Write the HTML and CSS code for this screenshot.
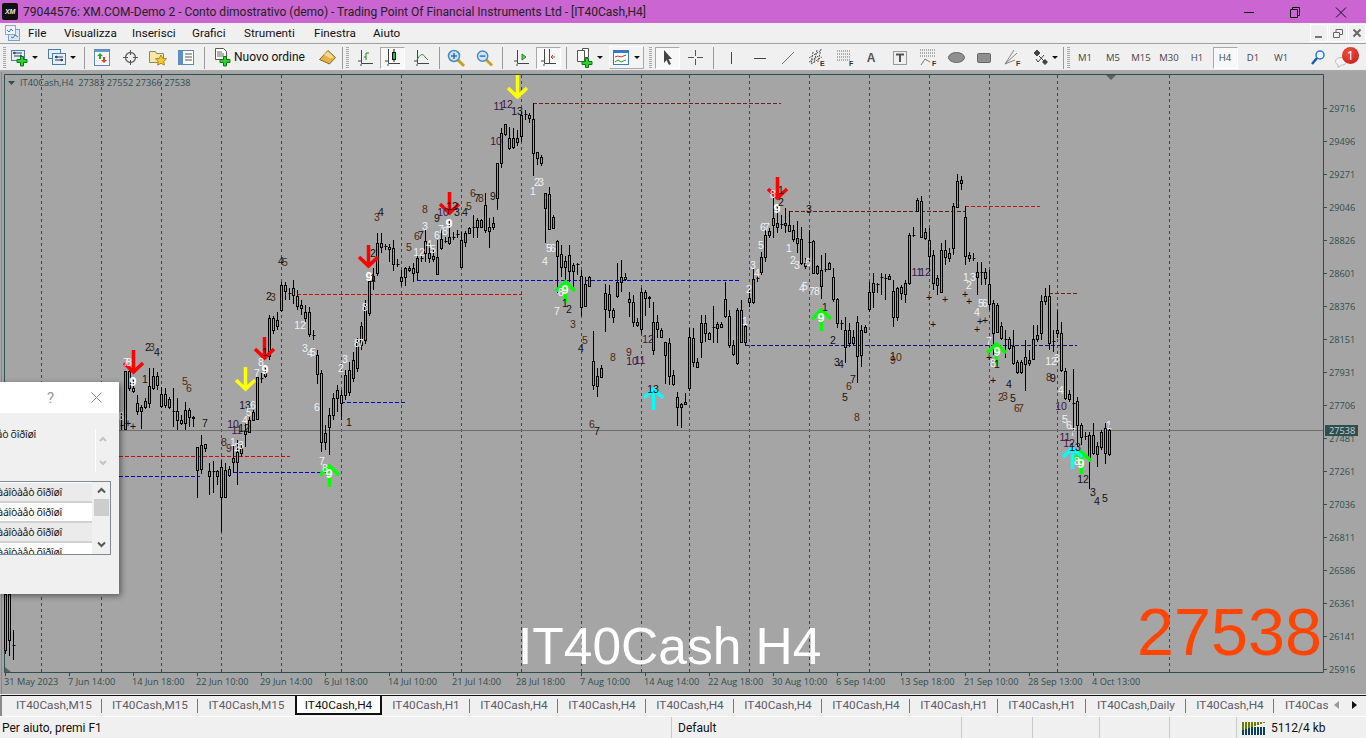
FILE: index.html
```html
<!DOCTYPE html>
<html lang="it">
<head>
<meta charset="utf-8">
<title>MetaTrader 4</title>
<link rel="stylesheet" href="styles.css">
</head>
<body>
<div class="app">
  <header class="titlebar">
    <div class="logo">XM</div>
    <div class="title-text">79044576: XM.COM-Demo 2 - Conto dimostrativo (demo) - Trading Point Of Financial Instruments Ltd - [IT40Cash,H4]</div>
    <div class="winbtns">
      <svg class="winbtn" width="46" height="20" viewBox="0 0 46 20"><path d="M18 10.5h10" stroke="#111" fill="none"/></svg>
      <svg class="winbtn" width="46" height="20" viewBox="0 0 46 20"><path d="M18.5 7.5h7v8h-7zM20.5 7.5v-2h7v8h-2" stroke="#111" fill="none"/></svg>
      <svg class="winbtn" width="46" height="20" viewBox="0 0 46 20"><path d="M18 5.5l10 10M28 5.5l-10 10" stroke="#111" fill="none"/></svg>
    </div>
  </header>

  <nav class="menubar">
    <svg class="menuicon" width="15" height="16" viewBox="0 0 15 16"><rect x="3.5" y="4.500" width="11" height="11" fill="#dce8f5" stroke="#7f9fc5"/><rect x=".5" y=".5" width="10" height="9" fill="#eef3fa" stroke="#88a8cc"/><path d="M2 5l2 2 2-3 2 2M6 12l2 1 2-3 3 2" stroke="#3f78b8" fill="none"/></svg>
    <span class="menuitem m-file">File</span>
    <span class="menuitem m-vis">Visualizza</span>
    <span class="menuitem m-ins">Inserisci</span>
    <span class="menuitem m-gra">Grafici</span>
    <span class="menuitem m-str">Strumenti</span>
    <span class="menuitem m-fin">Finestra</span>
    <span class="menuitem m-aiu">Aiuto</span>
    <div class="mdibtns">
      <span class="mdibtn"><svg width="10" height="10" viewBox="0 0 10 10"><path d="M1 8h7v2H1z" fill="#777"/></svg></span>
      <span class="mdibtn"><svg width="10" height="10" viewBox="0 0 10 10"><path d="M.5 4.500h6v5h-6zM3 4V1.500h6.500v5H7" stroke="#666" fill="none"/><path d="M1 4.500h5M3 1.500h6" stroke="#666"/></svg></span>
      <span class="mdibtn"><svg width="10" height="10" viewBox="0 0 10 10"><path d="M1.500 1.500l7 7M8.500 1.500l-7 7" stroke="#666" stroke-width="2" fill="none"/></svg></span>
    </div>
  </nav>

  <div class="toolbar">
    <svg class="grip ml3" width="3" height="22"></svg>
    <svg class="ml5" width="17" height="18" viewBox="0 0 17 18"><rect x=".5" y="1.500" width="13" height="10" fill="#e6eef8" stroke="#4d7aa8"/><path d="M3 4h8M3 7h5M2 4l2-1v2zM11 7l-2-1v2z" stroke="#26415f" fill="none"/><path d="M9.500 7.500h3v3h3.500v3h-3.500v3.500h-3v-3.500h-3.500v-3h3.500z" fill="#2fd02f" stroke="#0a7a14"/></svg>
    <i class="drop ml4"></i>
    <svg class="ml10" width="18" height="18" viewBox="0 0 18 18"><rect x=".5" y=".5" width="12" height="9" fill="#e6eef8" stroke="#4d7aa8"/><rect x="4.500" y="4.500" width="13" height="11" fill="#e6eef8" stroke="#4d7aa8"/><path d="M7 8h8M7 11h8M7 8l2-1v2zM15 11l-2-1v2z" stroke="#26415f" fill="none"/></svg>
    <i class="drop ml4"></i>
    <i class="sep ml8"></i>
    <svg class="ml9" width="16" height="17" viewBox="0 0 16 17"><rect x=".5" y=".5" width="15" height="16" fill="#f5f8fc" stroke="#5e88b5"/><path d="M1 1h14v2H1z" fill="#6a98c8"/><path d="M6 4l3 3H7v3H5V7H3z" fill="#22aa22"/><path d="M10 14l-3-3h2V8h2v3h2z" fill="#e04020"/></svg>
    <svg class="ml13" width="15" height="15" viewBox="0 0 15 15"><circle cx="7.500" cy="7.500" r="5" fill="none" stroke="#666" stroke-width="1.300"/><path d="M7.500 0v5M7.500 10v5M0 7.500h5M10 7.500h5" stroke="#555" fill="none"/></svg>
    <svg class="ml11" width="18" height="17" viewBox="0 0 18 17"><path d="M.5 2.500h6l1 2h7v9H.5z" fill="#f7e8a8" stroke="#8a8a60"/><path d="M12 6l1.700 3.300 3.800.5-2.700 2.600.6 3.700-3.400-1.800-3.400 1.800.6-3.700-2.700-2.600 3.800-.5z" fill="#f5c832" stroke="#a88a20"/></svg>
    <svg class="ml11" width="16" height="15" viewBox="0 0 16 15"><rect x=".5" y=".5" width="15" height="14" fill="#fff" stroke="#5e88b5"/><path d="M1 1h4v13H1z" fill="#5a90cc"/><path d="M7 4h7M7 7h7M7 10h7" stroke="#555"/></svg>
    <i class="sep ml10"></i>
    <svg class="ml10" width="17" height="19" viewBox="0 0 17 19"><path d="M.5.500h8l3 3v8H.5z" fill="#fff" stroke="#555"/><path d="M2 4h5M2 6h7M2 8h7" stroke="#666"/><path d="M8.500 8.500h3v3h3.500v3h-3.500v3.500h-3v-3.500h-3.500v-3h3.500z" fill="#2fd02f" stroke="#0a7a14"/></svg>
    <span class="order-text ml2">Nuovo ordine</span>
    <svg class="ml12" width="17" height="15" viewBox="0 0 17 15"><path d="M9 .5l7.500 7-6 6.500L.5 9.500z" fill="#e6b04a" stroke="#8a6a22"/><path d="M9 1.500l6 6-4 1-6-4z" fill="#f5d890"/></svg>
    <i class="sep ml6"></i>
    <svg class="grip ml3" width="3" height="22"></svg>
    <svg class="ml9" width="15" height="16" viewBox="0 0 15 16"><path d="M3.500 0v13.500H15M0 11h3M3 14v2" stroke="#444" fill="none"/><path d="M8 10V3M8 3h3M6 7h2" stroke="#1a8a1a" fill="none"/></svg>
    <span class="toolbox ml7"><svg width="15" height="17" viewBox="0 0 15 17"><path d="M3.500 0v14.500H15M0 12h3M3 15v2" stroke="#444" fill="none"/><rect x="7.500" y="3.500" width="3" height="7" fill="#25c425" stroke="#111"/><path d="M9 0v3M9 11v2" stroke="#111"/></svg></span>
    <svg class="ml9" width="15" height="16" viewBox="0 0 15 16"><path d="M3.500 0v13.500H15M0 11h3M3 14v2" stroke="#444" fill="none"/><path d="M3 10c3-6 6-7 8-3l3 3" stroke="#2a8a40" fill="none"/></svg>
    <i class="sep ml10"></i>
    <svg class="ml7" width="18" height="18" viewBox="0 0 18 18"><path d="M11 11l6 6" stroke="#c8a020" stroke-width="3"/><circle cx="7" cy="7" r="5.500" fill="#d0e4f8" stroke="#4488c8" stroke-width="1.500"/><path d="M4 7h6M7 4v6" stroke="#3070b0" stroke-width="1.500"/></svg>
    <svg class="ml11" width="17" height="18" viewBox="0 0 18 18"><path d="M11 11l6 6" stroke="#c8a020" stroke-width="3"/><circle cx="7" cy="7" r="5.500" fill="#d0e4f8" stroke="#4488c8" stroke-width="1.500"/><path d="M4 7h6" stroke="#3070b0" stroke-width="1.500"/></svg>
    <i class="sep ml9"></i>
    <svg class="ml11" width="15" height="16" viewBox="0 0 15 16"><path d="M3.500 0v13.500H15M0 11h3M3 14v2" stroke="#444" fill="none"/><path d="M8 4l4 3-4 3z" fill="#6c6" stroke="#1a8a1a"/></svg>
    <span class="toolbox ml7"><svg width="15" height="17" viewBox="0 0 15 17"><path d="M3.500 0v14.500H15M0 12h3M3 15v2" stroke="#444" fill="none"/><path d="M8.500 0v14" stroke="#1f4fa0"/><path d="M14 8H10M12 6l-2 2 2 2" stroke="#c84020" fill="none"/></svg></span>
    <i class="sep ml5"></i>
    <svg class="ml10" width="18" height="20" viewBox="0 0 18 20"><path d="M5.500.5h6v9h-6z" fill="#fff" stroke="#555"/><path d="M.5 2.500h7v11h-7z" fill="#fff" stroke="#555"/><path d="M8.500 10.500h3v3h3.500v3h-3.500v3h-3v-3h-3.500v-3h3.500z" fill="#2fd02f" stroke="#0a7a14"/></svg>
    <i class="drop ml2"></i>
    <span class="indicators ml6"><svg width="16" height="15" viewBox="0 0 16 15"><rect x=".5" y=".5" width="15" height="14" fill="#fff" stroke="#3a78c0"/><path d="M1 1h14v2H1z" fill="#3a78c0"/><path d="M2 7l3-1 3 1 5-2" stroke="#d83020" fill="none"/><path d="M2 12l3-2 3 2 5-2" stroke="#20a020" fill="none"/></svg><i class="drop"></i></span>
    <svg class="grip ml5" width="3" height="22"></svg>
    <span class="toolbox ml3"><svg width="10" height="15" viewBox="0 0 10 15"><path d="M1 0l8 9H5.500l2.500 5-2 1-2.500-5L1 13z" fill="#444"/></svg></span>
    <svg class="ml8" width="15" height="15" viewBox="0 0 15 15"><path d="M7.500 0v6M7.500 9v6M0 7.500h6M9 7.500h6" stroke="#555" fill="none"/></svg>
    <i class="sep ml10"></i>
    <svg class="ml10" width="14" height="14" viewBox="0 0 14 14"><path d="M7.500 1v12" stroke="#444"/></svg>
    <svg class="ml15" width="14" height="14" viewBox="0 0 14 14"><path d="M1 7.500h12" stroke="#444"/></svg>
    <svg class="ml14" width="14" height="14" viewBox="0 0 14 14"><path d="M1 13L13 1" stroke="#777"/></svg>
    <svg class="ml13" width="17" height="17" viewBox="0 0 17 17"><path d="M1 9l11-7M1 13l11-7M3 15l11-7M5 3l-2 12M9 1L6 14M13 0l-3 13" stroke="#555" fill="none" stroke-dasharray="2 1"/><text class="tiny" x="12" y="17">E</text></svg>
    <svg class="ml12" width="17" height="17" viewBox="0 0 17 17"><path d="M0 2h14M0 5h14M0 8h14M0 11h14" stroke="#666" stroke-dasharray="1 1"/><text class="tiny" x="12" y="17">F</text></svg>
    <span class="lettericon ml10">A</span>
    <svg class="ml15" width="14" height="14" viewBox="0 0 14 14"><rect x=".5" y=".5" width="13" height="13" fill="none" stroke="#444" stroke-dasharray="1 1"/><path d="M3 3.500h8M7 3.500V11" stroke="#555" stroke-width="2"/></svg>
    <svg class="ml13" width="17" height="17" viewBox="0 0 17 17"><path d="M0 1h15M0 4h15M0 7h15" stroke="#666" stroke-dasharray="1 1"/><path d="M1 16l4-6 5 3" stroke="#777" fill="none"/><text class="tiny" x="12" y="17">F</text></svg>
    <svg class="ml11" width="17" height="11" viewBox="0 0 17 11"><ellipse cx="8.500" cy="5.500" rx="8" ry="5" fill="#8f8f8f" stroke="#666"/></svg>
    <svg class="ml12" width="14" height="10" viewBox="0 0 14 10"><rect x=".5" y=".5" width="13" height="9" rx="1" fill="#8f8f8f" stroke="#666"/></svg>
    <svg class="ml14" width="16" height="17" viewBox="0 0 16 17"><path d="M0 15L9 1M0 15L12 4M0 15l10-4" stroke="#888" fill="none"/><text class="tiny" x="11" y="17">F</text></svg>
    <svg class="ml12" width="15" height="15" viewBox="0 0 15 15"><path d="M4 0l3 3-3 3-3-3zM6 6l6 6M3 9l2 3 6-7" stroke="#444" fill="none"/><path d="M4 0l3 3-3 3-3-3zM12 9l3 3-3 3-3-3z" fill="#444"/></svg>
    <i class="drop ml4"></i>
    <i class="sep ml5"></i>
    <svg class="grip ml3" width="3" height="22"></svg>
    <div class="periods">
      <span class="period">M1</span><span class="period">M5</span><span class="period">M15</span><span class="period">M30</span><span class="period">H1</span><span class="period active">H4</span><span class="period">D1</span><span class="period">W1</span>
    </div>
    <svg class="ml16" width="14" height="15" viewBox="0 0 14 15"><circle cx="9" cy="5" r="4" fill="#eef6ff" stroke="#2a78d8" stroke-width="1.500"/><path d="M6 8l-5 6" stroke="#2058b0" stroke-width="2.500"/></svg>
    <span class="chat ml10"><svg width="12" height="11" viewBox="0 0 12 11"><path d="M6 .5c3 0 5.500 1.500 5.500 4s-2.500 3.500-5 3.500L3 10.500V7.500C1.500 7 .5 6 .5 4.500.5 2 3 .5 6 .5z" fill="#f5f5f5" stroke="#bbb"/></svg><b class="badge">1</b></span>
  </div>

  <main class="chart">
    <svg id="plot" class="plot" width="1366" height="622" viewBox="0 72 1366 622"></svg>
    <div class="bigsymbol">IT40Cash H4</div>
    <div class="bigprice">27538</div>
    <section class="dialog">
      <div class="dlg-head"><span class="dlg-q">?</span><svg width="11" height="11" viewBox="0 0 11 11"><path d="M.5.5l10 10M10.500.5l-10 10" stroke="#888" fill="none"/></svg></div>
      <div class="dlg-top">
        <div class="garble short"><span>ðàáîòàåò õîðîøî</span></div>
        <div class="spin"><svg width="8" height="6" viewBox="0 0 8 6"><path d="M1 5l3-3 3 3" stroke="#c4c4c4" stroke-width="2" fill="none"/></svg><svg width="8" height="6" viewBox="0 0 8 6"><path d="M1 1l3 3 3-3" stroke="#c4c4c4" stroke-width="2" fill="none"/></svg></div>
      </div>
      <div class="dlg-list">
        <div class="rows">
          <div class="garble row alt"><span>ðàáîòàåò õîðîøî</span></div>
          <div class="garble row"><span>ðàáîòàåò õîðîøî</span></div>
          <div class="garble row alt"><span>ðàáîòàåò õîðîøî</span></div>
          <div class="garble row"><span>ðàáîòàåò õîðîøî</span></div>
        </div>
        <div class="lscroll"><svg width="9" height="7" viewBox="0 0 9 7"><path d="M1 5.500l3.500-3.500 3.500 3.500" stroke="#555" stroke-width="2" fill="none"/></svg><i class="thumb"></i><svg class="ldown" width="9" height="7" viewBox="0 0 9 7"><path d="M1 1.500l3.500 3.500 3.500-3.500" stroke="#555" stroke-width="2" fill="none"/></svg></div>
      </div>
    </section>
  </main>

  <div class="tabs">
    <span class="tab w96">IT40Cash,M15</span><span class="tab w96">IT40Cash,M15</span><span class="tab w97 nosep">IT40Cash,M15</span><span class="tab w87 active">IT40Cash,H4</span><span class="tab w88">IT40Cash,H1</span><span class="tab w88">IT40Cash,H4</span><span class="tab w88">IT40Cash,H4</span><span class="tab w88">IT40Cash,H4</span><span class="tab w88">IT40Cash,H4</span><span class="tab w88">IT40Cash,H4</span><span class="tab w88">IT40Cash,H1</span><span class="tab w88">IT40Cash,H1</span><span class="tab w100">IT40Cash,Daily</span><span class="tab w88">IT40Cash,H4</span><span class="tab clip">IT40Cash,H4</span>
    <span class="tabarrows"><i class="tl"></i><i class="tr"></i></span>
  </div>

  <footer class="status">
    <span class="cell c1">Per aiuto, premi F1</span>
    <span class="cell c2">Default</span>
    <span class="cell c3"></span>
    <span class="cell c4"></span>
    <span class="cell c5"></span>
    <span class="cell c6"></span>
    <span class="cell c7">
      <svg width="24" height="14" viewBox="0 0 24 14"><path d="M1 6V14M4 6V14M7 6V14M10 6V14M13 6V14M16 6V14M19 6V14M22 6V14" stroke="#0a3f60" stroke-width="2" fill="none"/><path d="M1 1V9M4 1V8M7 1V7M10 1V6M13 1V5M16 1V4M19 1V3M22 1V2" stroke="#6a7f00" stroke-width="2" fill="none"/></svg>
      <span class="kb">5112/4 kb</span>
    </span>
  </footer>
</div>
<script src="chart.js"></script>
</body>
</html>
```
FILE: styles.css
```css
*{box-sizing:border-box}
html,body{margin:0;padding:0;width:1366px;height:738px;overflow:hidden}
body{font-family:Roboto,"Noto Sans","Liberation Sans",sans-serif;font-size:12px;color:#111;background:#f0f0f0}
.app{display:flex;flex-direction:column;width:1366px;height:738px}
svg{display:block;flex:none;overflow:visible}

.titlebar{display:flex;align-items:center;height:23px;background:#ca65d2;flex:none}
.logo{width:16px;height:17px;margin:0 0 0 2px;background:#111;border-radius:2px;color:#eee;font:italic 700 7px/17px "Liberation Sans",sans-serif;text-align:center;letter-spacing:-.3px}
.title-text{margin-left:5px;white-space:nowrap;font-size:12px;color:#222}
.winbtns{margin-left:auto;display:flex;margin-right:2px}
.winbtn{margin-left:0}

.menubar{display:flex;align-items:center;height:20px;flex:none;background:#f0f0f0;position:relative}
.menuicon{margin-left:5px}
.menuitem{white-space:nowrap;font-size:11.700px}
.m-file{margin-left:8px;width:36px}
.m-vis{width:68px}
.m-ins{width:60px}
.m-gra{width:52px}
.m-str{width:70px}
.m-fin{width:59px}
.m-aiu{width:40px}
.mdibtns{margin-left:auto;display:flex;gap:1px}
.mdibtn{width:18px;height:18px;background:#f0f0f0;border:1px solid #fff;display:flex;align-items:center;justify-content:center}

.toolbar{display:flex;align-items:center;height:29px;flex:none;background:#f0f0f0;border-top:1px solid #a0a0a0;border-bottom:2px solid #a8a8a8;padding-top:1px}
.grip{background:repeating-linear-gradient(#a8a8a8 0 1px,#f0f0f0 1px 2px)}
.sep{display:block;width:1px;height:22px;background:#9a9a9a;flex:none}
.drop{display:block;flex:none;width:6px;height:3px;border-left:3px solid transparent;border-right:3px solid transparent;border-top:3px solid #111}
.order-text{width:73px;font-size:12px;white-space:nowrap;margin-top:-1px}
.toolbox{width:25px;height:22px;flex:none;display:flex;align-items:center;justify-content:center;background:#f8f8f8;border:1px solid #fff;border-top-color:#a8a8a8;border-left-color:#a8a8a8}
.indicators{width:35px;height:23px;flex:none;display:flex;align-items:center;gap:5px;padding-left:3px;background:#f4f4f4;border:1px solid #fff;border-right-color:#a8a8a8;border-bottom-color:#a8a8a8}
.lettericon{width:14px;text-align:center;font:700 12px "Liberation Sans",sans-serif;color:#555}
.tiny{font:700 7px "Liberation Sans",sans-serif;fill:#333}
.periods{display:flex;margin-left:1px;align-items:center}
.period{width:28px;height:22px;line-height:22px;text-align:center;font-family:"Open Sans",sans-serif;font-size:9.500px;color:#444}
.period.active{width:25px;margin:0 1.500px;background:#f8f8f8;border:1px solid #fff;border-top-color:#a8a8a8;border-left-color:#a8a8a8;line-height:20px}
.chat{position:relative;width:24px;height:20px;flex:none;display:flex;align-items:flex-end}
.badge{position:absolute;left:7px;top:-1px;width:17px;height:17px;border-radius:50%;background:radial-gradient(circle at 40% 30%,#f05040,#c01810);color:#fff;font:400 12px/17px "Noto Sans",sans-serif;text-align:center}

.ml1{margin-left:1px}.ml2{margin-left:2px}.ml3{margin-left:3px}.ml4{margin-left:4px}.ml5{margin-left:5px}.ml6{margin-left:6px}.ml7{margin-left:7px}.ml8{margin-left:8px}.ml9{margin-left:9px}.ml10{margin-left:10px}.ml11{margin-left:11px}.ml12{margin-left:12px}.ml13{margin-left:13px}.ml14{margin-left:14px}.ml15{margin-left:15px}.ml16{margin-left:16px}

.chart{position:relative;height:622px;flex:none;background:#a5a5a5;overflow:hidden}
.plot{position:absolute;left:0;top:0}
.plot text{font-family:"Liberation Sans",sans-serif;font-size:10.500px;text-anchor:middle}
.plot .axis{font-family:"Open Sans","Noto Sans",sans-serif;font-size:9.200px;fill:#2f4f4f;text-anchor:start}
.plot .pricebox{fill:#c8d0d0}
.k{fill:#111}.w{fill:#f2f2f2}.p{fill:#3c1545}.b{fill:#4c2a10}
.plot .nine{font-weight:700;font-size:12.500px;fill:#fff}
.grid{stroke:#2f4f4f;stroke-dasharray:3 3;fill:none}
.bull{fill:#22e022;stroke:#000}
.bear{fill:#f58068;stroke:#000}
.wick{stroke:#000}
.bigsymbol{position:absolute;left:518px;top:542px;font:51.500px/64px "Liberation Sans",sans-serif;color:#fff;white-space:nowrap}
.bigprice{position:absolute;left:1137px;top:522px;font:66.500px/76px "Liberation Sans",sans-serif;color:#ff4500;white-space:nowrap}

.dialog{position:absolute;left:0;top:310px;width:119px;height:212px;background:#f0f0f0;box-shadow:2px 2px 6px rgba(0,0,0,.45);display:flex;flex-direction:column}
.dlg-head{height:31px;background:#fff;display:flex;align-items:center;flex:none;padding-left:47px}
.dlg-q{width:44px;font-size:15px;color:#999}
.dlg-top{display:flex;height:43px;margin-top:16px;flex:none;position:relative}
.garble{display:flex;justify-content:flex-end;overflow:hidden;white-space:nowrap;font-family:"Noto Sans",sans-serif;font-size:10.500px;letter-spacing:-.3px;color:#222}
.garble.short{width:36px;height:18px;margin-top:-2px}
.spin{position:absolute;left:95px;top:0;width:15px;height:43px;border-left:1px solid #fff;display:flex;flex-direction:column;justify-content:space-between;align-items:center;padding:7px 0 6px}
.dlg-list{width:111px;height:74px;margin-top:9px;border:1px solid #808890;border-left:0;background:#fff;display:flex;flex:none;overflow:hidden}
.rows{width:92px;flex:none;padding-top:1px}
.row{width:92px;height:20px;line-height:18px;padding-right:30px;border-bottom:2px solid #d0d0d0;background:#fff}
.row.alt{background:#ebebeb}
.lscroll{flex:1;display:flex;flex-direction:column;align-items:center;background:#f0f0f0;padding-top:5px;position:relative}
.thumb{display:block;width:15px;height:17px;background:#cdcdcd;margin-top:5px}
.ldown{margin-top:25px}

.tabs{display:flex;height:21px;flex:none;background:#f0f0f0;border-top:1px solid #111;border-left:2px solid #8a8a8a;padding-left:4px;position:relative;overflow:hidden;margin-top:1px}
.tab{position:relative;flex:none;height:19px;line-height:19px;text-align:center;font-size:11.800px;color:#5c5c68;white-space:nowrap}
.tab::after{content:"";position:absolute;right:0;top:3px;width:1px;height:14px;background:#777}
.tab.nosep::after,.tab.active::after,.tab.clip::after{display:none}
.w96{width:96px}.w97{width:97px}.w87{width:87px}.w88{width:88px}.w100{width:100px}
.tab.active{background:#fff;color:#111;border:2px solid #111;border-top:0;margin-top:-1px;height:20px;line-height:20px;box-shadow:0 -1px 0 #fff}
.tab.clip{width:54px;overflow:hidden;text-align:left;padding-left:11px}
.tabarrows{margin-left:auto;display:flex;align-items:center;gap:13px;padding:0 9px 2px 0}
.tl,.tr{display:block;width:0;height:0;border-top:4px solid transparent;border-bottom:4px solid transparent}
.tl{border-right:5px solid #999}
.tr{border-left:5px solid #111}

.status{display:flex;height:22px;flex:none;background:#f0f0f0;border-top:1px solid #fff;align-items:center}
.cell{height:22px;line-height:22px;font-size:12px;white-space:nowrap;border-right:1px solid #c8c8c8;flex:none;padding-left:2px}
.c1{width:672px}.c2{width:290px;padding-left:6px}.c3{width:71px}.c4{width:67px}.c5{width:70px}.c6{width:67px}
.c7{border:0;display:flex;align-items:center;gap:5px;padding-left:5px}
.kb{line-height:22px}
```
FILE: chart.js
```js
// x, high, bodyTop, bodyBottom, low, kind (g bull, r bear, d doji)
var C=[
[5,594,594,650,654,'g'],[9,594,594,640,656,'r'],[13,630,645,647,660,'d'],
[121,413,425,426,430,'d'],[125,371,371,429,429,'g'],[129,365,371,388,391,'r'],[133,380,388,391,393,'r'],
[137,395,403,411,415,'r'],[141,405,407,411,429,'g'],[145,398,401,407,409,'g'],[149,368,386,403,408,'g'],[153,368,376,388,390,'g'],[157,372,376,385,390,'r'],
[161,387,394,406,408,'g'],[165,388,394,405,408,'r'],[169,397,399,407,409,'g'],[173,388,411,412,427,'d'],[177,398,411,420,430,'r'],[181,415,420,423,425,'r'],
[185,402,410,423,430,'g'],[189,408,410,417,427,'r'],[193,416,417,418,427,'r'],[197,447,447,470,498,'r'],[201,435,445,469,474,'g'],[205,444,444,448,452,'r'],
[209,463,471,476,495,'g'],[213,461,471,472,493,'d'],[217,470,471,476,485,'r'],[221,460,467,497,532,'r'],[225,463,470,497,497,'g'],[229,466,469,475,477,'r'],
[233,445,458,462,473,'r'],[237,440,452,462,485,'g'],[241,445,448,453,457,'g'],[245,423,431,434,447,'g'],[249,417,420,432,433,'g'],[253,410,412,420,421,'g'],
[257,377,377,419,420,'g'],[261,373,378,379,383,'d'],[265,368,373,376,378,'g'],[269,315,318,356,360,'g'],[273,316,318,330,334,'r'],[277,312,320,326,330,'g'],
[281,282,285,310,312,'g'],[285,282,285,291,300,'r'],[289,288,293,294,300,'d'],[293,280,288,295,304,'r'],[297,290,296,306,310,'r'],[301,300,305,308,315,'r'],
[305,305,312,318,322,'g'],[309,307,312,334,337,'r'],[313,330,335,336,340,'d'],[317,350,355,374,384,'r'],[321,370,373,442,452,'r'],[325,425,433,442,450,'g'],
[329,408,415,427,455,'g'],[333,393,398,415,420,'g'],[337,385,390,398,412,'g'],[341,390,395,403,420,'r'],[345,370,375,395,400,'g'],[349,362,370,392,396,'g'],
[353,352,360,378,382,'g'],[357,338,342,368,372,'g'],[361,322,326,345,350,'g'],[365,300,306,340,344,'g'],[369,281,281,313,316,'g'],[373,268,276,280,290,'r'],
[377,233,243,273,276,'g'],[381,233,243,247,253,'r'],[385,244,246,247,250,'d'],[389,244,247,249,262,'r'],[393,240,248,264,271,'r'],[397,259,264,265,267,'d'],
[401,270,277,281,286,'g'],[405,267,268,277,286,'g'],[409,266,268,270,272,'r'],[413,263,268,273,282,'r'],[417,255,258,272,280,'g'],[421,255,258,259,262,'d'],
[425,230,241,253,262,'r'],[429,243,253,258,263,'r'],[433,250,256,259,262,'g'],[437,240,257,274,275,'g'],[441,228,239,248,250,'g'],[445,237,241,242,243,'d'],
[449,220,237,243,245,'g'],[453,232,237,238,240,'d'],[457,230,234,235,238,'d'],[461,232,240,267,268,'g'],[465,231,233,242,247,'g'],[469,227,228,233,234,'g'],
[473,215,227,228,238,'d'],[477,218,220,227,238,'r'],[481,219,220,227,228,'g'],[485,193,205,230,233,'r'],[489,218,227,231,248,'r'],[493,217,223,227,230,'g'],
[497,163,163,198,210,'g'],[501,128,133,163,168,'g'],[505,124,124,134,136,'g'],[509,127,138,148,150,'r'],[513,128,138,147,149,'g'],[517,130,138,142,146,'g'],
[521,112,115,136,142,'g'],[525,110,114,115,120,'d'],[529,113,115,118,123,'r'],[533,103,119,153,176,'r'],[537,152,152,158,165,'r'],[541,155,157,163,166,'r'],
[545,193,193,208,243,'g'],[549,187,194,229,230,'r'],[553,215,217,228,229,'g'],[557,240,241,256,293,'r'],[561,245,254,267,277,'r'],[565,256,261,267,282,'g'],
[569,245,255,271,282,'r'],[573,263,265,271,290,'g'],[577,263,264,265,275,'d'],[581,270,276,307,316,'r'],[585,277,284,306,307,'g'],[589,276,277,286,287,'g'],
[593,331,361,385,390,'r'],[597,368,376,386,397,'g'],[601,365,368,377,378,'g'],[605,284,293,309,332,'g'],[609,285,294,310,318,'r'],[613,308,310,317,323,'r'],
[617,263,282,296,298,'g'],[621,260,277,282,292,'g'],[625,273,277,279,281,'r'],[629,292,299,302,317,'r'],[633,295,302,322,327,'r'],[637,318,322,325,327,'r'],
[641,288,292,329,334,'g'],[645,290,292,298,316,'r'],[649,296,297,298,308,'g'],[653,302,322,350,355,'g'],[657,315,322,329,338,'r'],[661,328,330,337,338,'r'],
[665,342,342,355,384,'g'],[669,338,343,376,385,'r'],[673,370,375,384,386,'r'],[677,392,397,407,426,'r'],[681,403,404,407,428,'g'],[685,393,402,404,405,'g'],
[689,328,337,388,391,'g'],[693,328,338,362,367,'r'],[697,358,362,367,368,'r'],[701,315,323,342,358,'g'],[705,315,323,333,342,'r'],[709,332,333,339,340,'r'],
[713,306,327,328,343,'d'],[717,322,324,328,343,'g'],[721,322,324,327,328,'r'],[725,282,299,316,318,'r'],[729,310,316,345,348,'r'],[733,340,345,354,356,'r'],
[737,308,310,363,365,'g'],[741,300,310,342,343,'r'],[745,325,326,342,345,'g'],[749,290,298,302,307,'r'],[753,269,279,302,304,'g'],[757,276,278,279,282,'d'],
[761,252,257,272,275,'g'],[765,230,235,257,262,'g'],[769,228,231,235,238,'g'],[773,198,218,225,238,'r'],[777,207,223,227,233,'g'],[781,215,224,225,229,'d'],
[785,208,223,225,233,'r'],[789,211,225,231,232,'r'],[793,225,230,239,242,'r'],[797,221,238,243,253,'g'],[801,227,239,263,265,'r'],[805,258,263,266,269,'r'],
[809,230,242,243,263,'d'],[813,240,241,273,274,'r'],[817,265,266,273,275,'g'],[821,255,270,286,299,'g'],[825,253,269,270,272,'d'],[829,262,263,269,270,'g'],
[833,268,277,299,302,'r'],[837,298,299,323,328,'r'],[841,320,323,324,330,'d'],[845,317,330,347,363,'g'],[849,323,330,343,347,'r'],[853,330,337,343,345,'g'],
[857,316,322,356,383,'r'],[861,325,330,355,367,'g'],[865,325,327,332,333,'g'],[869,282,292,309,312,'g'],[873,273,283,292,308,'g'],[877,283,284,285,293,'d'],
[881,273,277,278,295,'d'],[885,274,278,279,300,'d'],[889,274,276,279,279,'g'],[893,280,291,317,327,'r'],[897,287,288,317,321,'g'],[901,285,287,293,300,'r'],
[905,280,283,294,303,'g'],[909,233,235,283,285,'g'],[913,227,235,236,237,'d'],[917,198,200,211,212,'g'],[921,196,201,237,238,'r'],[925,228,232,238,240,'g'],
[929,228,240,256,272,'r'],[933,250,255,283,290,'r'],[937,275,278,285,295,'g'],[941,243,250,292,293,'g'],[945,240,250,257,265,'r'],[949,248,253,258,262,'g'],
[953,203,206,248,255,'g'],[957,174,181,207,208,'g'],[961,176,180,183,190,'g'],[965,206,217,256,265,'r'],[969,252,255,258,262,'r'],[973,253,258,259,261,'d'],
[977,262,272,277,295,'g'],[981,262,272,273,285,'d'],[985,268,272,278,285,'r'],[989,270,284,304,310,'r'],[993,300,303,333,355,'r'],[997,303,305,332,333,'g'],
[1001,322,326,338,340,'r'],[1005,330,339,340,358,'d'],[1009,337,339,348,350,'r'],[1013,330,346,363,365,'r'],[1017,360,362,372,374,'r'],[1021,360,362,372,374,'g'],
[1025,340,357,364,391,'r'],[1029,350,360,363,366,'g'],[1033,325,339,359,360,'g'],[1037,325,335,339,342,'g'],[1041,295,301,333,340,'g'],[1045,288,296,301,305,'g'],
[1049,285,296,343,350,'r'],[1053,330,341,342,352,'d'],[1057,310,330,333,338,'r'],[1061,322,333,370,372,'r'],[1065,368,371,398,400,'r'],[1069,390,394,399,402,'g'],
[1073,369,403,404,433,'d'],[1077,397,401,425,447,'r'],[1081,423,425,437,445,'r'],[1085,432,436,437,440,'d'],[1089,432,435,458,489,'g'],[1093,423,435,453,455,'r'],
[1097,442,446,454,467,'g'],[1101,430,432,447,450,'g'],[1105,423,428,453,464,'r'],[1109,425,430,454,456,'g']
];
// x, y, text, colour class
var L=[
[121,416,'6','w'],[126,362,'7','w'],[129,362,'8','w'],[133,382,'9','n'],[145,379,'1','k'],[148,347,'2','k'],[152,347,'3','b'],[157,352,'4','k'],[185,381,'5','b'],[189,388,'6','b'],[205,423,'7','k'],
[224,442,'8','b'],[229,448,'9','b'],[233,424,'10','p'],[237,430,'11','p'],[244,428,'12','k'],[245,405,'13','k'],[233,442,'1','w'],[237,447,'2','w'],[241,445,'3','w'],[245,420,'4','w'],[249,412,'5','w'],[253,405,'6','w'],
[257,373,'7','w'],[261,362,'8','w'],[265,370,'9','n'],[265,352,'1','k'],[269,296,'2','k'],[273,297,'3','b'],[281,261,'4','k'],[285,262,'5','b'],[300,325,'12','w'],[305,348,'3','w'],[310,353,'4','w'],[313,352,'5','w'],
[317,407,'6','w'],[322,461,'7','w'],[325,468,'8','w'],[329,474,'9','n'],[349,422,'1','k'],[341,368,'2','w'],[345,359,'3','w'],[357,343,'8','w'],[361,343,'7','w'],[365,307,'8','w'],[369,277,'9','n'],[373,278,'1','k'],
[373,253,'2','k'],[377,217,'3','b'],[381,212,'4','k'],[409,247,'5','b'],[417,236,'6','b'],[421,235,'7','k'],[425,226,'3','w'],[419,252,'12','w'],[429,244,'4','w'],[433,249,'5','w'],[437,235,'6','w'],[441,229,'7','w'],[445,231,'8','w'],[449,224,'9','n'],
[425,209,'8','b'],[437,218,'9','k'],[443,212,'10','p'],[452,206,'12','k'],[457,212,'3','k'],[465,212,'4','k'],[469,206,'5','b'],[473,193,'6','b'],[477,198,'7','k'],[481,198,'8','b'],[493,196,'9','k'],[496,141,'10','p'],[499,106,'11','p'],[507,104,'12','p'],[517,111,'13','k'],
[533,191,'1','w'],[537,182,'2','w'],[541,182,'3','w'],[545,261,'4','w'],[549,248,'5','w'],[553,248,'6','w'],[557,311,'7','w'],[561,292,'8','w'],[565,290,'9','n'],[565,303,'1','k'],[569,309,'2','k'],[573,324,'3','b'],[581,348,'4','k'],[585,340,'5','b'],[592,424,'6','b'],[597,431,'7','k'],
[613,357,'8','b'],[629,352,'9','b'],[632,361,'10','p'],[640,360,'11','p'],[648,339,'12','p'],[653,389,'13','k'],[745,321,'1','w'],[749,289,'2','w'],[753,265,'3','w'],[757,273,'4','w'],[761,245,'5','w'],[763,227,'6','w'],[767,227,'7','w'],[773,194,'8','w'],[777,209,'9','n'],[781,190,'1','k'],[781,202,'2','k'],[809,209,'3','k'],
[789,248,'1','w'],[793,260,'2','w'],[797,265,'3','w'],[808,262,'6','w'],[802,288,'4','w'],[805,286,'5','w'],[812,291,'7','w'],[817,291,'8','w'],[825,307,'1','k'],[821,318,'9','n'],[833,340,'2','k'],[837,362,'3','k'],[841,364,'4','k'],[845,397,'5','k'],[849,386,'6','b'],[853,379,'7','k'],[857,417,'8','b'],[893,360,'9','b'],[893,356,'1','k'],[899,357,'0','b'],[917,272,'11','p'],[925,272,'12','p'],
[929,297,'+','k'],[945,299,'+','k'],[933,324,'+','k'],[965,294,'+','k'],[969,301,'+','k'],[977,329,'+','k'],[980,321,'+','k'],[985,320,'+','k'],[966,277,'1','w'],[969,285,'2','w'],[973,277,'3','w'],[977,312,'4','w'],[981,303,'5','w'],[985,303,'6','w'],[989,341,'7','w'],[993,363,'8','w'],[997,352,'9','n'],[997,364,'1','k'],[989,357,'+','k'],[993,380,'+','k'],
[1009,384,'4','k'],[1001,397,'2','b'],[1005,396,'3','b'],[1013,398,'5','k'],[1017,408,'6','b'],[1021,408,'7','b'],[1049,377,'8','b'],[1053,378,'9','k'],[1051,361,'12','w'],[1057,358,'3','w'],[1061,390,'4','w'],[1061,406,'10','p'],[1065,419,'5','w'],[1069,425,'6','w'],[1073,432,'7','w'],[1065,437,'11','p'],[1069,443,'12','p'],[1075,447,'13','k'],[1077,461,'8','w'],[1081,464,'9','n'],[1083,479,'12','k'],[1093,492,'3','k'],[1097,501,'4','k'],[1105,498,'5','k'],[1109,425,'1','w'],
[128,423,'+','k'],[133,426,'+','k']
];
// x1, x2, y, colour
var H=[[533,781,103,'#742020'],[297,522,294,'#e00000'],[119,290,456,'#e00000'],[965,1040,206,'#c01818'],[789,965,211,'#5a1c1c'],[1049,1077,293,'#701c1c'],
[119,200,476,'#0000d0'],[233,330,472,'#0000d0'],[341,405,402,'#0000d0'],[417,739,280,'#0000d0'],[745,1077,345,'#101070']];
var VG=[41,101,161,221,281,341,401,461,521,581,641,689,749,809,869,929,989,1057,1169];
var TIMES=['31 May 2023','7 Jun 14:00','14 Jun 18:00','22 Jun 10:00','29 Jun 14:00','6 Jul 18:00','14 Jul 10:00','21 Jul 14:00','28 Jul 18:00','7 Aug 10:00','14 Aug 14:00','22 Aug 18:00','30 Aug 10:00','6 Sep 14:00','13 Sep 18:00','21 Sep 10:00','28 Sep 13:00','4 Oct 13:00'];
var PRICES=[[29716,108],[29496,141],[29271,174],[29046,207],[28826,240],[28601,273],[28376,306],[28151,339],[27931,372],[27706,405],[27481,438],[27261,471],[27036,504],[26811,537],[26586,570],[26361,603],[26141,636],[25916,669]];
// arrows: cx, top, height, colour, dir
var A=[[517,75,22,'#ffff00','d'],[245,367,22,'#ffff00','d'],[133,350,22,'#ff0000','d'],[264,337,21,'#ff0000','d'],[368,245,21,'#ff0000','d'],[449,192,21,'#ff0000','d'],[777,177,21,'#ff0000','d'],
[329,466,21,'#00ff00','u'],[565,282,21,'#00ff00','u'],[821,310,21,'#00ff00','u'],[996,344,21,'#00ff00','u'],[1081,452,22,'#00ff00','u'],[653,389,21,'#00ffff','u'],[1072,448,21,'#00ffff','u']];

var s='';
function line(x1,y1,x2,y2,extra){s+='<line x1="'+x1+'" y1="'+y1+'" x2="'+x2+'" y2="'+y2+'" '+extra+'/>';}
function text(x,y,t,cls){s+='<text x="'+x+'" y="'+y+'" class="'+cls+'">'+t+'</text>';}
// grid + frame
VG.forEach(function(x){line(x+.5,75,x+.5,672,'class="grid"');});
s+='<path d="M4.500 74.500H1323.500V672.500H4.500Z" fill="none" stroke="#2f4f4f"/>';
s+='<path d="M1.500 72V694" stroke="#888" fill="none"/>';
s+='<path d="M1106 75h10l-5 5zM5 667v5h6z" fill="#5f5f5f"/><path d="M8 81h7l-3.500 4z" fill="#2f4f4f"/>';
for(var i=0;i<18;i++){var tx=i?5+64*i:5;line(tx+.5,672,tx+.5,676,'stroke="#2f4f4f"');text(i?4+64*i:4,685,TIMES[i],'axis');}
PRICES.forEach(function(p){line(1323,p[1]+.5,1327,p[1]+.5,'stroke="#2f4f4f"');text(1329,p[1]+4,p[0],'axis');});
text(20,86,'IT40Cash,H4&#160; 27383 27552 27366 27538','axis');
line(5,430.5,1323,430.5,'stroke="#6e6e6e"');
H.forEach(function(h){line(h[0],h[2]+.5,h[1],h[2]+.5,'stroke="'+h[3]+'" stroke-dasharray="4 2"');});
// candles
C.forEach(function(c){
  var x=c[0]+.5;
  line(x,c[1],x,c[4],'class="wick"');
  if(c[5]==='d'){line(x-1,c[2]+.5,x+2,c[2]+.5,'class="wick"');}
  else{s+='<rect x="'+(x-1)+'" y="'+(c[2]+.5)+'" width="2" height="'+Math.max(1,c[3]-c[2])+'" class="'+(c[5]==='g'?'bull':'bear')+'"/>';}
});
// arrows
A.forEach(function(a){
  var x=a[0]+.5,t=a[1],b=t+a[2],w=9.5,p;
  if(a[4]==='d'){p='M'+x+' '+t+'V'+b+'M'+(x-w)+' '+(b-9)+'L'+x+' '+b+'L'+(x+w)+' '+(b-9);}
  else{p='M'+x+' '+b+'V'+t+'M'+(x-w)+' '+(t+9)+'L'+x+' '+t+'L'+(x+w)+' '+(t+9);}
  s+='<path d="'+p+'" fill="none" stroke="'+a[3]+'" stroke-width="3.500"/>';
});
// labels
L.forEach(function(l){text(l[0],l[1]+3.500,l[2],l[3]==='n'?'nine':l[3]);});
// price box
s+='<rect x="1325" y="425" width="33" height="11" fill="#2f4f4f"/>';
text(1329,434,27538,'axis pricebox');
document.getElementById('plot').innerHTML=s;
```
